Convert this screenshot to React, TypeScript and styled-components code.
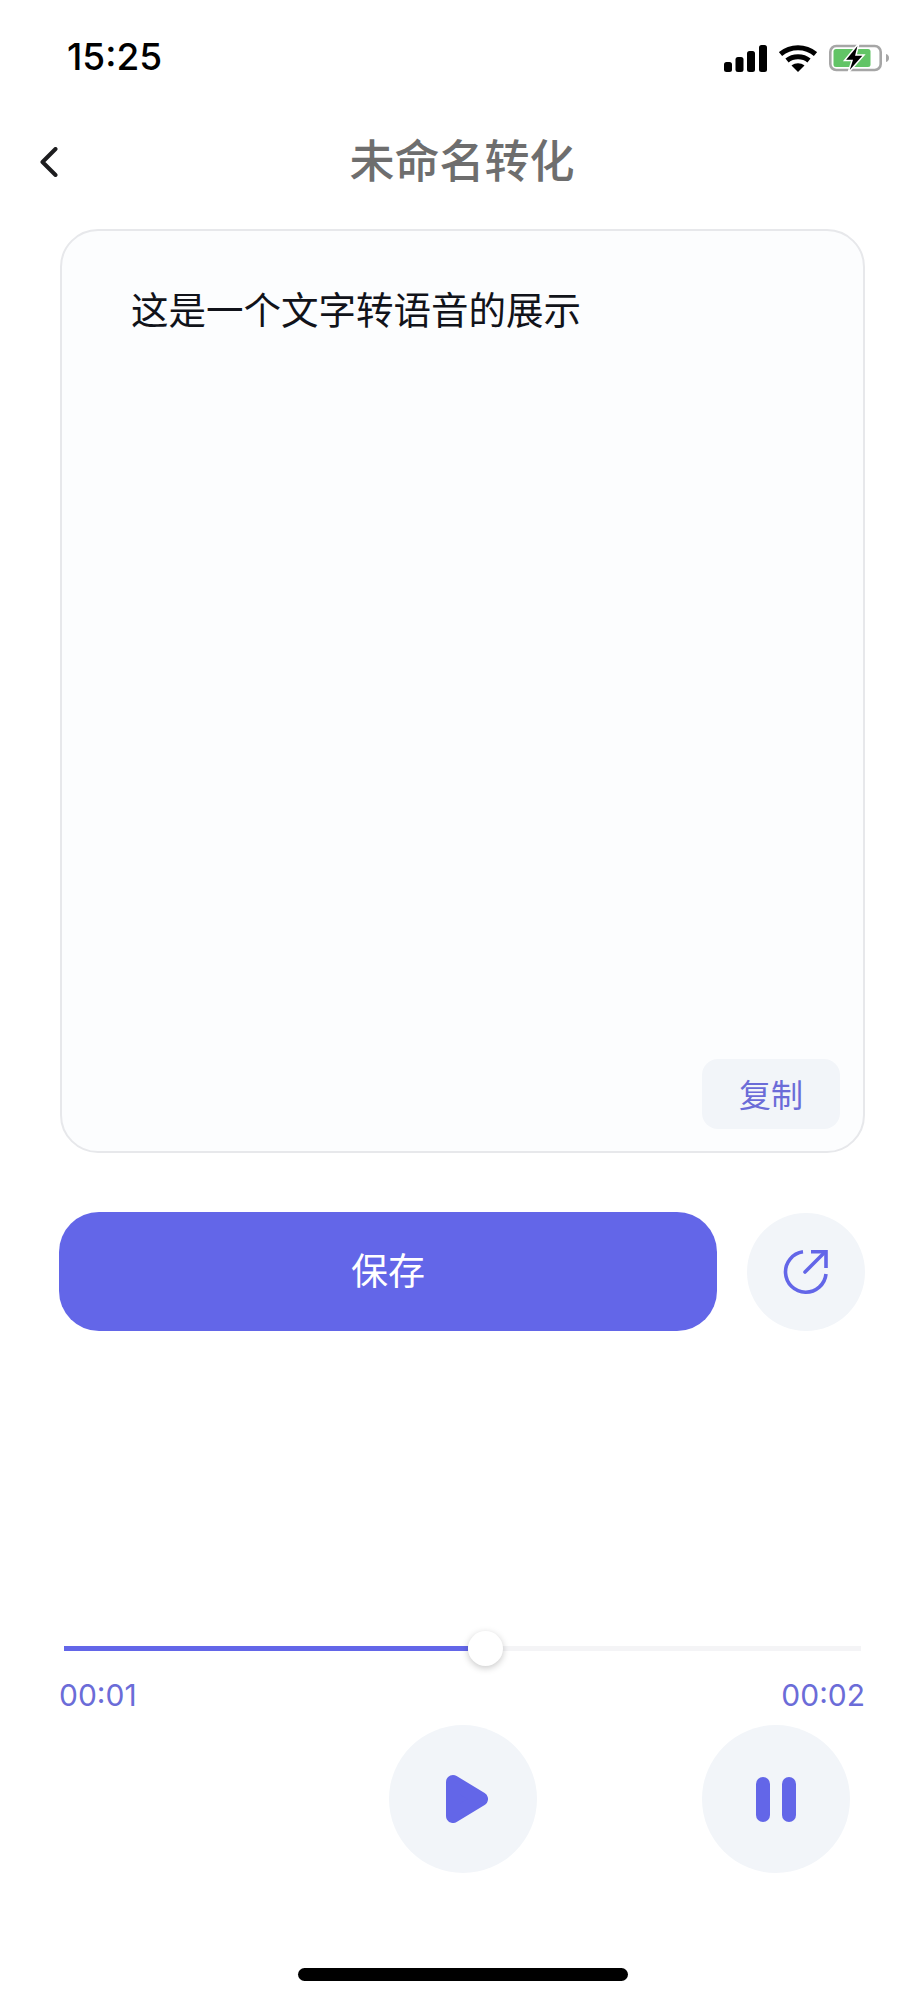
import styled, { createGlobalStyle } from 'styled-components';

const PRIMARY = '#6366e8';
const SOFT = '#f2f5f9';
const CJK = '"Noto Sans CJK SC", "Noto Sans", sans-serif';

const GlobalStyle = createGlobalStyle`
  html, body {
    margin: 0;
    padding: 0;
    background: #ffffff;
  }
  * {
    box-sizing: border-box;
  }
`;

const SignalIcon = () => (
  <svg width="43" height="27" viewBox="0 0 43 27">
    <rect x="0" y="17" width="8" height="10" rx="2.5" fill="#000" />
    <rect x="11.5" y="12" width="8" height="15" rx="2.5" fill="#000" />
    <rect x="23" y="6" width="8" height="21" rx="2.5" fill="#000" />
    <rect x="35" y="0" width="8" height="27" rx="2.5" fill="#000" />
  </svg>
);

const WifiIcon = () => (
  <svg width="38" height="28" viewBox="0 0 38 28">
    <path d="M1.500 10 C11.500 1.500 26.500 1.500 36.500 10" fill="none" stroke="#000" strokeWidth="5" />
    <path d="M8 16.500 C14 11.500 24 11.500 30 16.500" fill="none" stroke="#000" strokeWidth="5" />
    <path d="M12.500 21.500 C16.500 18.500 21.500 18.500 25.500 21.500 L19 28 Z" fill="#000" />
  </svg>
);

const BatteryIcon = () => (
  <svg width="60" height="30" viewBox="0 -1 60 30" style={{ overflow: 'visible' }}>
    <rect x="1.300" y="2" width="50.400" height="24" rx="6" fill="none" stroke="#a6a6a6" strokeWidth="2.600" />
    <rect x="4.500" y="5" width="37" height="18" rx="2.500" fill="#62c466" />
    <path d="M57 10 C59 10.500 60 12 60 14 C60 16 59 17.500 57 18 Z" fill="#a6a6a6" />
    <path d="M30 -1 L15.500 16.500 H23 L19 29 L35 11 H27 Z" fill="#000" stroke="#fff" strokeWidth="1.500" />
  </svg>
);

const BackIcon = () => (
  <svg width="20" height="30" viewBox="0 0 20 30">
    <path d="M16.500 2 L3.500 15 L16.500 28" fill="none" stroke="#1d1d1f" strokeWidth="4" strokeLinecap="round" strokeLinejoin="round" />
  </svg>
);

const ShareIcon = () => (
  <svg width="46" height="46" viewBox="0 0 46 46">
    <path d="M20 2.800 A20.300 20.300 0 1 0 43 25" fill="none" stroke={PRIMARY} strokeWidth="3.600" />
    <path d="M22 23 L41 4" fill="none" stroke={PRIMARY} strokeWidth="3.600" strokeLinecap="round" />
    <path d="M28 2.800 H43 V19" fill="none" stroke={PRIMARY} strokeWidth="3.600" />
  </svg>
);

const PlayIcon = () => (
  <PlayGlyph width="42" height="48" viewBox="0 0 42 48">
    <path d="M7 7 L35 24 L7 41 Z" fill={PRIMARY} stroke={PRIMARY} strokeWidth="14" strokeLinejoin="round" />
  </PlayGlyph>
);

const PauseIcon = () => (
  <PauseGlyph>
    <PauseBar />
    <PauseBar />
  </PauseGlyph>
);

export default function App() {
  const progress = 0.5063;

  return (
    <Page>
      <GlobalStyle />
      <StatusBar>
        <Clock>15:25</Clock>
        <StatusIcons>
          <SignalIcon />
          <WifiIcon />
          <BatteryIcon />
        </StatusIcons>
      </StatusBar>

      <NavBar>
        <BackButton>
          <BackIcon />
        </BackButton>
        <Title>未命名转化</Title>
      </NavBar>

      <TextCard>
        <CardText>这是一个文字转语音的展示</CardText>
        <CopyButton>复制</CopyButton>
      </TextCard>

      <ActionRow>
        <SaveButton>保存</SaveButton>
        <ShareButton>
          <ShareIcon />
        </ShareButton>
      </ActionRow>

      <Player>
        <SliderTrack>
          <SliderFill style={{ width: `${progress * 100}%` }} />
          <SliderThumb style={{ left: `${progress * 100}%` }} />
        </SliderTrack>
        <TimeRow>
          <TimeLabel>00:01</TimeLabel>
          <TimeLabel>00:02</TimeLabel>
        </TimeRow>
        <Controls>
          <RoundControl>
            <PlayIcon />
          </RoundControl>
          <RoundControl>
            <PauseIcon />
          </RoundControl>
        </Controls>
      </Player>

      <HomeIndicator />
    </Page>
  );
}

const Page = styled.div`
  width: 924px;
  height: 2000px;
  display: flex;
  flex-direction: column;
  overflow: hidden;
  background: #ffffff;
  font-family: ${CJK};
`;

const StatusBar = styled.div`
  height: 88px;
  padding: 36px 35px 0 67px;
  display: flex;
  justify-content: space-between;
  align-items: flex-start;
`;

const Clock = styled.span`
  font-family: Inter, "Liberation Sans", sans-serif;
  font-size: 37px;
  font-weight: 500;
  line-height: 42px;
  color: #000000;
`;

const StatusIcons = styled.div`
  display: flex;
  align-items: center;
  gap: 12px;
  margin-top: 7px;
`;

const NavBar = styled.div`
  height: 141px;
  padding-top: 38px;
  display: grid;
  grid-template-columns: 1fr auto 1fr;
  align-items: start;
`;

const BackButton = styled.div`
  padding: 21px 0 0 39px;
  display: flex;
`;

const Title = styled.h1`
  margin: 0;
  font-size: 45px;
  font-weight: 500;
  line-height: 66px;
  color: #6e6e6e;
`;

const TextCard = styled.div`
  width: 805px;
  height: 924px;
  margin-left: 60px;
  padding: 49px 23px 22px 69px;
  display: flex;
  flex-direction: column;
  border: 2px solid #e7e8eb;
  border-radius: 38px;
  background: #fcfdfe;
`;

const CardText = styled.p`
  margin: 0;
  font-size: 37.500px;
  line-height: 56px;
  color: #11131a;
`;

const CopyButton = styled.div`
  width: 138px;
  height: 70px;
  margin-top: auto;
  align-self: flex-end;
  padding-bottom: 2px;
  display: flex;
  align-items: center;
  justify-content: center;
  border-radius: 16px;
  background: ${SOFT};
  font-size: 32px;
  color: #6b6cd8;
`;

const ActionRow = styled.div`
  margin: 59px 59px 0 59px;
  display: flex;
  justify-content: space-between;
  align-items: center;
`;

const SaveButton = styled.div`
  width: 658px;
  height: 119px;
  padding-bottom: 5px;
  display: flex;
  align-items: center;
  justify-content: center;
  border-radius: 40px;
  background: ${PRIMARY};
  font-size: 37px;
  color: #ffffff;
`;

const ShareButton = styled.div`
  width: 118px;
  height: 118px;
  display: flex;
  align-items: center;
  justify-content: center;
  border-radius: 50%;
  background: ${SOFT};
`;

const Player = styled.div`
  margin: 315px 59px 0 59px;
  display: flex;
  flex-direction: column;
`;

const SliderTrack = styled.div`
  position: relative;
  height: 5px;
  margin: 0 4px 0 5px;
  background: #f4f4f6;
`;

const SliderFill = styled.div`
  height: 100%;
  background: ${PRIMARY};
`;

const SliderThumb = styled.div`
  position: absolute;
  top: 50%;
  width: 35px;
  height: 35px;
  margin: -18px 0 0 0;
  border-radius: 50%;
  background: #ffffff;
  box-shadow: 0 2px 7px rgba(0, 0, 0, 0.22);
`;

const TimeRow = styled.div`
  margin-top: 24px;
  display: flex;
  justify-content: space-between;
`;

const TimeLabel = styled.span`
  font-family: Inter, "Liberation Sans", sans-serif;
  font-size: 30px;
  font-weight: 400;
  line-height: 40px;
  color: #6b6cd8;
`;

const Controls = styled.div`
  margin: 10px 15px 0 0;
  display: flex;
  justify-content: flex-end;
  gap: 165px;
`;

const RoundControl = styled.div`
  width: 148px;
  height: 148px;
  display: flex;
  align-items: center;
  justify-content: center;
  border-radius: 50%;
  background: ${SOFT};
`;

const PlayGlyph = styled.svg`
  margin-left: 8px;
`;

const PauseGlyph = styled.div`
  display: flex;
  gap: 12px;
`;

const PauseBar = styled.div`
  width: 14px;
  height: 45px;
  border-radius: 7px;
  background: ${PRIMARY};
`;

const HomeIndicator = styled.div`
  width: 330px;
  height: 13px;
  margin: auto 0 19px 298px;
  border-radius: 7px;
  background: #000000;
`;
